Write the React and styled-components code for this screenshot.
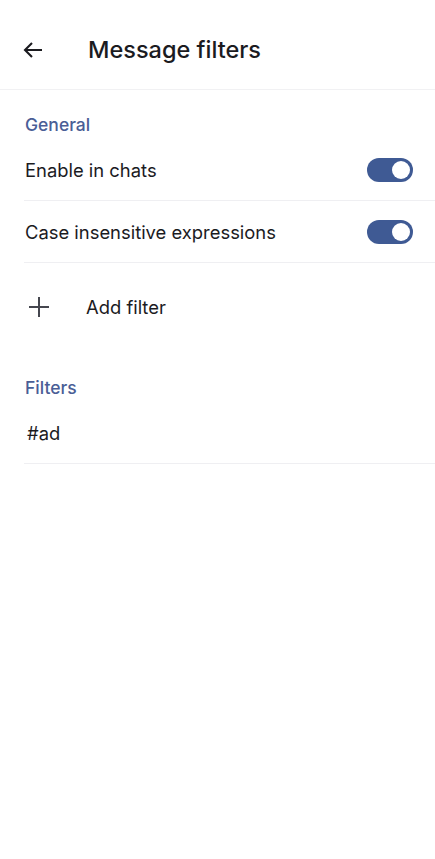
import React from 'react'
import styled, { createGlobalStyle } from 'styled-components'

const GlobalStyle = createGlobalStyle`
	html, body {
		margin: 0;
		padding: 0;
		background: #ffffff;
	}
	body {
		font-family: Inter, Roboto, sans-serif;
		color: #1b1b1f;
	}
`

const Page = styled.div`
	width: 100%;
	min-height: 100vh;
	background: #ffffff;
`

const Header = styled.header`
	height: 90px;
	box-sizing: border-box;
	display: flex;
	align-items: center;
	border-bottom: 1px solid #f1f1f3;
	padding: 10px 0 0 23px;
`

const BackButton = styled.button`
	border: 0;
	background: none;
	padding: 0;
	width: 20px;
	height: 16px;
	display: flex;
	color: #1b1b1f;
	margin-right: 45px;
`

const Title = styled.h1`
	margin: 0;
	font-size: 23.5px;
	font-weight: 500;
	color: #1b1b1f;
`

const Content = styled.main`
	padding-left: 24px;
`

const SectionTitle = styled.div`
	padding: 23px 0 2px 1px;
	line-height: 24px;
	font-size: 17.5px;
	font-weight: 500;
	color: #4a5e96;
`

const Row = styled.div`
	height: 62px;
	box-sizing: border-box;
	display: flex;
	align-items: center;
	justify-content: space-between;
	border-bottom: 1px solid #efeff2;
	padding: 0 22px 0 1px;
`

const Label = styled.span`
	font-size: 18.4px;
	color: #1b1b1f;
	padding-left: ${({ indent }) => indent || 0}px;
`

const Toggle = styled.div`
	width: 46px;
	height: 24px;
	border-radius: 12px;
	background: #3f5a94;
	display: flex;
	align-items: center;
	justify-content: ${({ on }) => (on ? 'flex-end' : 'flex-start')};
	padding: 0 3px;
	box-sizing: border-box;
	&::after {
		content: '';
		width: 18px;
		height: 18px;
		border-radius: 50%;
		background: #ffffff;
	}
`

const AddRow = styled.div`
	height: 90px;
	box-sizing: border-box;
	padding: 0 0 3px 4px;
	display: flex;
	align-items: center;
	gap: 36px;
`

const BackIcon = () => (
	<svg width="20" height="16" viewBox="0 0 20 16" fill="none">
		<path d="M19 8H2.2M9 1L2 8l7 7" stroke="currentColor" strokeWidth="2.1" />
	</svg>
)

const PlusIcon = () => (
	<svg width="22" height="22" viewBox="0 0 22 22" fill="none">
		<path d="M11 1v20M1 11h20" stroke="#45474f" strokeWidth="2" />
	</svg>
)

const settings = [
	{ label: 'Enable in chats', on: true },
	{ label: 'Case insensitive expressions', on: true }
]

const filters = ['#ad']

const App = () => (
	<Page>
		<GlobalStyle />
		<Header>
			<BackButton aria-label="Back">
				<BackIcon />
			</BackButton>
			<Title>Message filters</Title>
		</Header>
		<Content>
			<SectionTitle>General</SectionTitle>
			{settings.map(s => (
				<Row key={s.label}>
					<Label>{s.label}</Label>
					<Toggle on={s.on} />
				</Row>
			))}
			<AddRow>
				<PlusIcon />
				<Label>Add filter</Label>
			</AddRow>
			<SectionTitle>Filters</SectionTitle>
			{filters.map(f => (
				<Row key={f}>
					<Label indent={2}>{f}</Label>
				</Row>
			))}
		</Content>
	</Page>
)

export default App
